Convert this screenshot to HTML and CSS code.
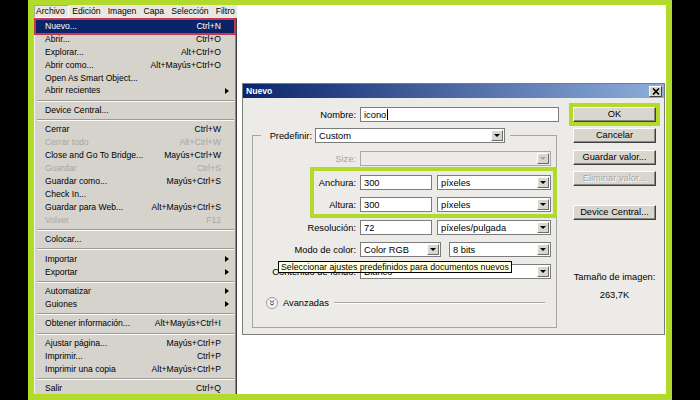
FILE: index.html
```html
<!DOCTYPE html>
<html lang="es">
<head>
<meta charset="utf-8">
<title>Nuevo</title>
<link rel="stylesheet" href="styles.css">
</head>
<body>
<div class="frame">
  <div class="ps">
    <div class="menubar">
      <span class="mb on">Archivo</span><span class="mb">Edición</span><span class="mb">Imagen</span><span class="mb">Capa</span><span class="mb">Selección</span><span class="mb">Filtro</span>
    </div>
    <div class="dropdown">
      <div class="mi cur"><span class="l">Nuevo...</span><span class="k">Ctrl+N</span><span class="a"></span></div>
      <div class="mi"><span class="l">Abrir...</span><span class="k">Ctrl+O</span><span class="a"></span></div>
      <div class="mi"><span class="l">Explorar...</span><span class="k">Alt+Ctrl+O</span><span class="a"></span></div>
      <div class="mi"><span class="l">Abrir como...</span><span class="k">Alt+Mayús+Ctrl+O</span><span class="a"></span></div>
      <div class="mi"><span class="l">Open As Smart Object...</span><span class="k"></span><span class="a"></span></div>
      <div class="mi"><span class="l">Abrir recientes</span><span class="k"></span><span class="a sub"></span></div>
      <div class="sep"></div>
      <div class="mi"><span class="l">Device Central...</span><span class="k"></span><span class="a"></span></div>
      <div class="sep"></div>
      <div class="mi"><span class="l">Cerrar</span><span class="k">Ctrl+W</span><span class="a"></span></div>
      <div class="mi dis"><span class="l">Cerrar todo</span><span class="k">Alt+Ctrl+W</span><span class="a"></span></div>
      <div class="mi"><span class="l">Close and Go To Bridge...</span><span class="k">Mayús+Ctrl+W</span><span class="a"></span></div>
      <div class="mi dis"><span class="l">Guardar</span><span class="k">Ctrl+S</span><span class="a"></span></div>
      <div class="mi"><span class="l">Guardar como...</span><span class="k">Mayús+Ctrl+S</span><span class="a"></span></div>
      <div class="mi"><span class="l">Check In...</span><span class="k"></span><span class="a"></span></div>
      <div class="mi"><span class="l">Guardar para Web...</span><span class="k">Alt+Mayús+Ctrl+S</span><span class="a"></span></div>
      <div class="mi dis"><span class="l">Volver</span><span class="k">F12</span><span class="a"></span></div>
      <div class="sep"></div>
      <div class="mi"><span class="l">Colocar...</span><span class="k"></span><span class="a"></span></div>
      <div class="sep"></div>
      <div class="mi"><span class="l">Importar</span><span class="k"></span><span class="a sub"></span></div>
      <div class="mi"><span class="l">Exportar</span><span class="k"></span><span class="a sub"></span></div>
      <div class="sep"></div>
      <div class="mi"><span class="l">Automatizar</span><span class="k"></span><span class="a sub"></span></div>
      <div class="mi"><span class="l">Guiones</span><span class="k"></span><span class="a sub"></span></div>
      <div class="sep"></div>
      <div class="mi"><span class="l">Obtener información...</span><span class="k">Alt+Mayús+Ctrl+I</span><span class="a"></span></div>
      <div class="sep"></div>
      <div class="mi"><span class="l">Ajustar página...</span><span class="k">Mayús+Ctrl+P</span><span class="a"></span></div>
      <div class="mi"><span class="l">Imprimir...</span><span class="k">Ctrl+P</span><span class="a"></span></div>
      <div class="mi"><span class="l">Imprimir una copia</span><span class="k">Alt+Mayús+Ctrl+P</span><span class="a"></span></div>
      <div class="sep"></div>
      <div class="mi"><span class="l">Salir</span><span class="k">Ctrl+Q</span><span class="a"></span></div>
    </div>
  </div>

  <div class="canvas">
    <div class="dialog">
      <div class="title">
        <span>Nuevo</span>
        <span class="close"><svg width="8" height="7" viewBox="0 0 8 7"><path d="M1 0.5L7 6.5M7 0.5L1 6.5" stroke="#000" stroke-width="1.7"/></svg></span>
      </div>
      <div class="dbody">
        <div class="left">
          <div class="row first">
            <span class="lb">Nombre:</span>
            <div class="inp w199">icono<i class="caret"></i></div>
          </div>
          <fieldset class="group">
            <legend class="lg">
              <span class="lbp">Predefinir:</span>
              <div class="sel w190"><span>Custom</span><b class="arr"></b></div>
            </legend>
            <div class="row mt8">
              <span class="lb dis">Size:</span>
              <div class="sel dis w191"><span></span><b class="arr"></b></div>
            </div>
            <div class="hl">
              <div class="row">
                <span class="lb">Anchura:</span>
                <div class="inp w72">300</div>
                <div class="sel w114 ml5"><span>píxeles</span><b class="arr"></b></div>
              </div>
              <div class="row">
                <span class="lb">Altura:</span>
                <div class="inp w72">300</div>
                <div class="sel w114 ml5"><span>píxeles</span><b class="arr"></b></div>
              </div>
            </div>
            <div class="row mt8">
              <span class="lb">Resolución:</span>
              <div class="inp w72">72</div>
              <div class="sel w114 ml5"><span>píxeles/pulgada</span><b class="arr"></b></div>
            </div>
            <div class="row">
              <span class="lb">Modo de color:</span>
              <div class="sel w81"><span>Color RGB</span><b class="arr"></b></div>
              <div class="sel w102 ml8"><span>8 bits</span><b class="arr"></b></div>
            </div>
            <div class="row">
              <span class="lb">Contenido de fondo:</span>
              <div class="sel w191"><span>Blanco</span><b class="arr"></b></div>
              <div class="tip">Seleccionar ajustes predefinidos para documentos nuevos</div>
            </div>
            <div class="adv">
              <svg width="12" height="12" viewBox="0 0 12 12"><circle cx="6" cy="6" r="5.5" fill="#f7f7f5" stroke="#9b9a96"/><path d="M3.8 3.6L6 5.4L8.2 3.6M3.8 6.4L6 8.2L8.2 6.4" fill="none" stroke="#333" stroke-width="1"/></svg>
              <span class="advt">Avanzadas</span>
              <span class="line"></span>
            </div>
          </fieldset>
        </div>
        <div class="right">
          <div class="btn ok">OK</div>
          <div class="btn mt6">Cancelar</div>
          <div class="btn mt7">Guardar valor...</div>
          <div class="btn dis mt6">Eliminar valor...</div>
          <div class="btn mt19">Device Central...</div>
          <div class="info">Tamaño de imagen:</div>
          <div class="info2">263,7K</div>
        </div>
      </div>
    </div>
  </div>
</div>
</body>
</html>
```

FILE: styles.css
```css
* { box-sizing: border-box; }

body {
  margin: 0;
  width: 700px;
  height: 400px;
  overflow: hidden;
  background: #000;
  font-family: "Liberation Sans", Arial, sans-serif;
  color: #000;
}

.frame {
  margin-left: 28px;
  width: 644px;
  height: 400px;
  border-style: solid;
  border-color: #b2da2b;
  border-width: 5px 6px 6px 6px;
  background: #fff;
  display: flex;
}

/* ---------- Photoshop menu ---------- */
.ps {
  width: 203px;
  display: flex;
  flex-direction: column;
  overflow: hidden;
}

.menubar {
  height: 13px;
  display: flex;
  background: #e9e7e2;
  font-size: 8.6px;
  line-height: 13px;
}

.mb {
  padding: 0 3.6px;
  white-space: nowrap;
}

.mb.on {
  padding: 0 3px 0 1px;
  border: 1px solid;
  border-color: #a9a7a1 #fff #fff #a9a7a1;
  line-height: 11px;
}

.dropdown {
  flex: 1;
  background: #d6d3cd;
  border-left: 1px solid #f3f2ee;
  border-right: 1px solid #404040;
  box-shadow: inset -1px 0 #8a8883;
  padding-top: 2px;
  font-size: 8.6px;
}

.mi {
  display: flex;
  height: 12.9px;
  line-height: 12.9px;
  padding: 0 5px 0 10px;
  white-space: nowrap;
}

.mi .l { flex: 1; }

.mi .a {
  width: 10px;
  display: flex;
  align-items: center;
  justify-content: flex-end;
  padding-right: 2px;
}

.mi .a.sub::after {
  content: "";
  border-left: 4px solid #000;
  border-top: 3.5px solid transparent;
  border-bottom: 3.5px solid transparent;
}

.mi.dis { color: #a9a6a0; }

.mi.cur {
  background: #0a246a;
  color: #fff;
  margin: 0 2px 0 1px;
  padding-left: 9px;
  padding-right: 3px;
  outline: 2px solid #c8354d;
}

.sep {
  height: 0;
  border-top: 1px solid #9c9a95;
  border-bottom: 1px solid #fbfaf8;
  margin: 2.3px 2px;
}

/* ---------- canvas & dialog ---------- */
.canvas {
  flex: 1;
  padding: 78px 0 0 5px;
}

.dialog {
  width: 423px;
  height: 252px;
  border: 1px solid #7b7b7b;
  background: #ecebe8;
  display: flex;
  flex-direction: column;
}

.title {
  height: 14px;
  background: linear-gradient(90deg, #0a246a, #8eaedc);
  display: flex;
  align-items: center;
  justify-content: space-between;
  padding: 0 2px 0 3px;
  color: #fff;
  font-weight: bold;
  font-size: 8.6px;
}

.close {
  width: 13px;
  height: 11px;
  background: #d9d6d0;
  border: 1px solid;
  border-color: #fff #404040 #404040 #fff;
  display: flex;
  align-items: center;
  justify-content: center;
}

.dbody {
  flex: 1;
  display: flex;
  font-size: 9.3px;
}

.left { width: 319px; }

.right {
  width: 83px;
  margin-left: 11px;
  padding-top: 9px;
  display: flex;
  flex-direction: column;
}

.row {
  display: flex;
  align-items: center;
  height: 15px;
  margin-top: 7px;
  position: relative;
}

.row.first { margin-top: 9px; }

.lb {
  width: 107px;
  padding-right: 4px;
  text-align: right;
  white-space: nowrap;
}

.first .lb { width: 117px; }

.lb.dis { color: #a5a39e; }

.inp {
  height: 15px;
  border: 1px solid #7c7c7c;
  background: #fff;
  padding-left: 3px;
  display: flex;
  align-items: center;
  white-space: nowrap;
}

.caret {
  display: inline-block;
  width: 1px;
  height: 11px;
  background: #000;
  margin-left: 1px;
}

.sel {
  height: 15px;
  border: 1px solid #7c7c7c;
  background: #fff;
  display: flex;
  align-items: center;
  padding: 0 1px 0 3px;
}

.sel span {
  flex: 1;
  white-space: nowrap;
  overflow: hidden;
}

.arr {
  width: 12px;
  height: 11px;
  background: #d9d6d0;
  border: 1px solid;
  border-color: #fff #6b6b6b #6b6b6b #fff;
  display: flex;
  align-items: center;
  justify-content: center;
}

.arr::after {
  content: "";
  border-top: 3px solid #000;
  border-left: 3px solid transparent;
  border-right: 3px solid transparent;
}

.sel.dis {
  background: #ecebe8;
  border-color: #a9a9a9;
}

.sel.dis .arr::after { border-top-color: #a5a39e; }

.w199 { width: 199px; }
.w190 { width: 190px; }
.w191 { width: 191px; }
.w72 { width: 72px; }
.w114 { width: 114px; }
.w81 { width: 81px; }
.w102 { width: 102px; }
.ml5 { margin-left: 5px; }
.ml8 { margin-left: 8px; }
.mt6 { margin-top: 6px; }
.mt7 { margin-top: 7px; }
.mt8 { margin-top: 8px; }
.mt19 { margin-top: 19px; }

.group {
  margin: 6px 0 0 9px;
  width: 305px;
  min-width: 0;
  padding: 0 0 18px 0;
  border: 1px solid #a6a5a0;
}

.lg {
  margin-left: 8px;
  padding: 0 5px 0 0;
  display: flex;
  align-items: center;
  height: 15px;
}

.lbp {
  width: 54px;
  padding-right: 3px;
  text-align: right;
}

.hl {
  position: relative;
  margin-top: 9px;
}

.hl .row:first-child { margin-top: 0; }

.hl::after {
  content: "";
  position: absolute;
  left: 57px;
  right: -1px;
  top: -8px;
  bottom: -6px;
  border: 4px solid #b2da2b;
}

.tip {
  position: absolute;
  left: 25px;
  top: -3px;
  height: 12px;
  line-height: 10px;
  padding: 0 2px;
  border: 1px solid #000;
  background: #ffffe1;
  font-size: 8.8px;
  white-space: nowrap;
}

.adv {
  height: 13px;
  margin-top: 17px;
  display: flex;
  align-items: center;
  padding-left: 13px;
}

.advt { margin-left: 5px; }

.adv .line {
  flex: 1;
  margin: 0 11px 0 5px;
  border-top: 1px solid #a6a5a0;
  border-bottom: 1px solid #fff;
}

.btn {
  height: 15px;
  background: #d9d6d0;
  border: 1px solid;
  border-color: #fff #404040 #404040 #fff;
  box-shadow: inset -1px -1px #8a8883;
  text-align: center;
  line-height: 13px;
  white-space: nowrap;
}

.btn.ok { outline: 4px solid #b2da2b; }

.btn.dis {
  color: #a8a6a1;
  text-shadow: 1px 1px #fff;
}

.info {
  text-align: center;
  line-height: 12px;
  margin-top: 51px;
}

.info2 {
  text-align: center;
  line-height: 12px;
  margin-top: 6px;
}
```
